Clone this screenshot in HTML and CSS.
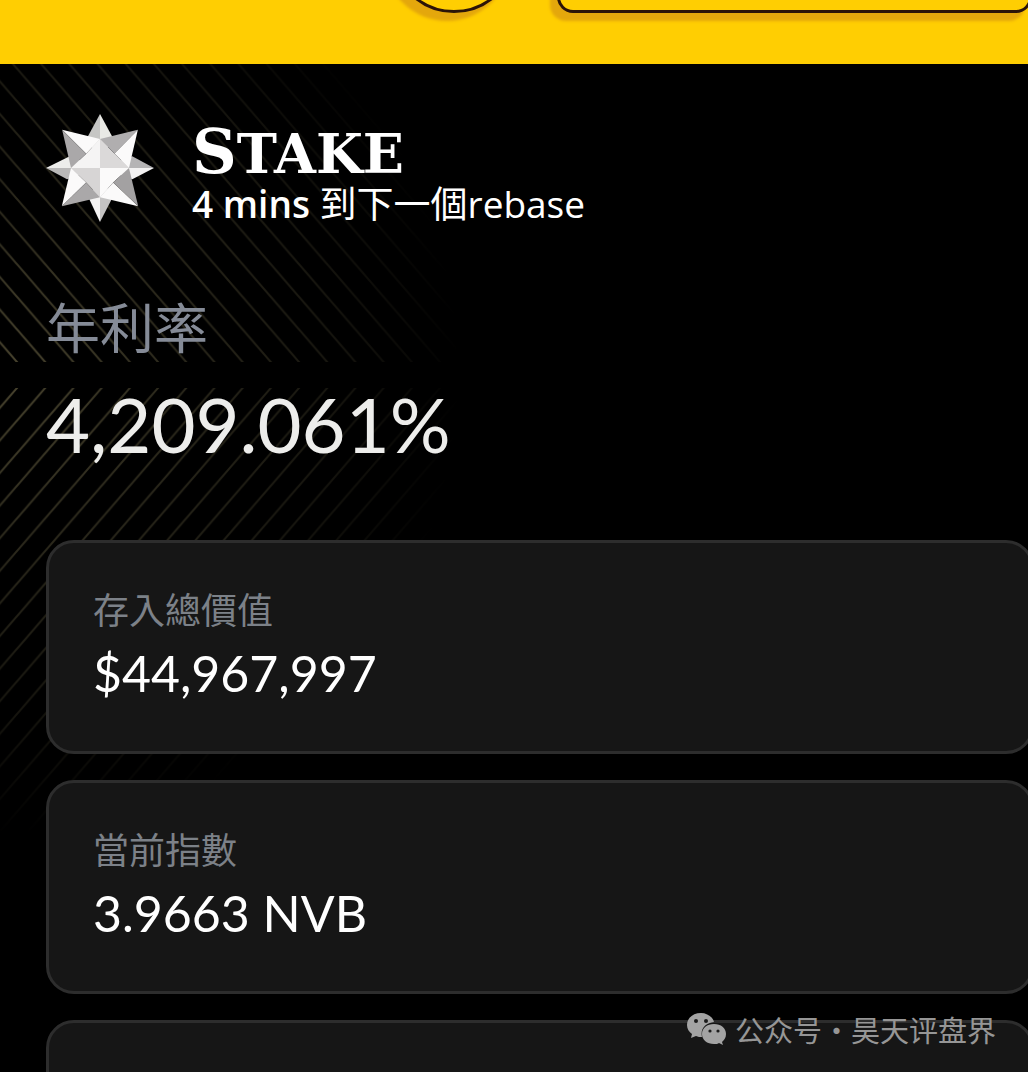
FILE: index.html
```html
<!DOCTYPE html>
<html lang="zh-Hant">
<head>
<meta charset="utf-8">
<meta name="viewport" content="width=device-width, initial-scale=1">
<title>Stake</title>
<link rel="stylesheet" href="styles.css">
</head>
<body>
<div class="page">
  <header class="topbar">
    <button class="round-button" type="button" aria-label="Menu"></button>
    <button class="wide-button" type="button" aria-label="Wallet"></button>
  </header>

  <main class="stake">
    <svg class="stripes" width="480" height="780" viewBox="0 64 480 780" aria-hidden="true">
      <defs>
        <pattern id="down" patternUnits="userSpaceOnUse" x="17" y="362" width="28.2" height="32.6">
          <path d="M0 0L28.2 32.6M-14.1 16.3L14.1 48.9M14.1 -16.3L42.3 16.3"/>
        </pattern>
        <pattern id="up" patternUnits="userSpaceOnUse" x="17" y="388" width="28.2" height="32.6">
          <path d="M0 32.6L28.2 0M-14.1 16.3L14.1 -16.3M14.1 48.9L42.3 16.3"/>
        </pattern>
        <radialGradient id="fade" gradientUnits="userSpaceOnUse" cx="0" cy="375" r="460">
          <stop offset="0" stop-color="#fff"/>
          <stop offset="0.35" stop-color="#999"/>
          <stop offset="0.7" stop-color="#555"/>
          <stop offset="1" stop-color="#000"/>
        </radialGradient>
        <mask id="glow" maskUnits="userSpaceOnUse" x="0" y="64" width="480" height="780">
          <rect x="0" y="64" width="480" height="780" fill="url(#fade)"/>
        </mask>
      </defs>
      <g mask="url(#glow)">
        <rect x="0" y="64" width="480" height="298" fill="url(#down)"/>
        <rect x="0" y="388" width="480" height="456" fill="url(#up)"/>
      </g>
    </svg>

    <section class="heading">
      <svg class="star" viewBox="46 42 328 328" aria-hidden="true">
        <path fill="#c6c6c4" d="M210 42V206L173 110z"/>
        <path fill="#e9e9e5" d="M210 42V206L247 110z"/>
        <path fill="#ededeb" d="M46 206H210L118 170z"/>
        <path fill="#b9b8b8" d="M46 206H210L110 240z"/>
        <path fill="#b5b4b5" d="M374 206H210L308 170z"/>
        <path fill="#f3f2f2" d="M374 206H210L308 240z"/>
        <path fill="#f4f3f3" d="M210 370V206L178 302z"/>
        <path fill="#c4c3c3" d="M210 370V206L245 302z"/>
        <path fill="#f5f4f4" d="M210 118V206H122L168 163z"/>
        <path fill="#dbd9d9" d="M210 118V206H298L254 162z"/>
        <path fill="#d7d5d5" d="M122 206H210V295L168 250z"/>
        <path fill="#fbfafa" d="M298 206H210V295L250 250z"/>
        <path fill="#fbfafa" d="M95 90L210 118L168 163z"/>
        <path fill="#aaa8a9" d="M95 90L122 206L168 163z"/>
        <path fill="#b0aeaf" d="M325 90L210 118L254 162z"/>
        <path fill="#fbfafa" d="M325 90L298 206L254 162z"/>
        <path fill="#fbfafa" d="M94 322L122 206L168 250z"/>
        <path fill="#aaa8a9" d="M94 322L210 295L168 250z"/>
        <path fill="#fbfafa" d="M326 322L210 295L250 250z"/>
        <path fill="#a3a1a2" d="M326 322L298 206L250 250z"/>
      </svg>
      <div class="heading-text">
        <h1 class="title">STAKE</h1>
        <p class="rebase"><strong>4 mins</strong> 到下一個rebase</p>
      </div>
    </section>

    <section class="apy">
      <h2 class="apy-label">年利率</h2>
      <p class="apy-value">4,209.061%</p>
    </section>

    <section class="cards">
      <article class="card">
        <h3 class="card-label">存入總價值</h3>
        <p class="card-value">$44,967,997</p>
      </article>
      <article class="card">
        <h3 class="card-label">當前指數</h3>
        <p class="card-value">3.9663 NVB</p>
      </article>
      <article class="card"></article>
    </section>
  </main>

  <div class="watermark" lang="zh-Hans">
    <svg class="wechat" viewBox="0 0 39 33" aria-hidden="true">
      <path fill="#a3a3a3" d="M14 0C6 0 0 5 0 12c0 4 2 7 5 9l-1 4 5-2c2 1 4 1 6 1C13 15 19 10 27 9 26 4 20 0 14 0z"/>
      <path fill="#a3a3a3" d="M27 11c-7 0-12 4-12 10s5 10 12 10c2 0 4 0 5-1l4 2-1-3c2-2 4-4 4-8 0-6-5-10-12-10z"/>
      <g fill="#1c1c1c"><circle cx="9" cy="8" r="2"/><circle cx="19" cy="8" r="2"/><circle cx="23" cy="18" r="1.6"/><circle cx="31" cy="18" r="1.6"/></g>
    </svg>
    <span>公众号</span><span class="dot">·</span><span>昊天评盘界</span>
  </div>
</div>
</body>
</html>
```
FILE: styles.css
```css
* {
  box-sizing: border-box;
}

body {
  margin: 0;
  background: #000;
  color: #fff;
  font-family: "Open Sans", "Noto Sans CJK TC", sans-serif;
}

h1, h2, h3, p {
  margin: 0;
  font-weight: 400;
}

.page {
  position: relative;
  height: 100vh;
  overflow: hidden;
}

.topbar {
  display: flex;
  justify-content: flex-end;
  align-items: flex-end;
  gap: 40px;
  height: 64px;
  padding-bottom: 51px;
  margin-right: -4px;
  overflow: hidden;
  background: #ffce02;
}

.round-button,
.wide-button {
  flex: none;
  height: 126px;
  padding: 0;
  border: 3px solid #2c1408;
  background: #ffce02;
  box-shadow: -7px 8px 3px #e4a70c;
}

.round-button {
  width: 126px;
  border-radius: 50%;
}

.wide-button {
  width: 46%;
  border-radius: 16px;
}

.stake {
  position: relative;
  padding: 50px 0 0 46px;
}

.stripes {
  position: absolute;
  top: 0;
  left: 0;
}

.stripes path {
  fill: none;
  stroke: #4b4630;
  stroke-width: 2;
}

.heading,
.apy,
.cards {
  position: relative;
}

.heading {
  display: flex;
  align-items: flex-start;
  gap: 38px;
}

.heading-text {
  padding-top: 10px;
}

.star {
  width: 108px;
  height: 108px;
}

.title {
  font: 700 54px/56px "DejaVu Serif", serif;
}

.title::first-letter {
  font-size: 62px;
}

.rebase {
  font-size: 37px;
  line-height: 44px;
}

.rebase strong {
  font-weight: 600;
}

.apy {
  padding-top: 62px;
}

.apy-label {
  color: #858b97;
  font-size: 54px;
  line-height: 80px;
}

.apy-value {
  color: #ededeb;
  font: 400 76px/112px Lato, sans-serif;
}

.cards {
  display: flex;
  flex-direction: column;
  gap: 26px;
  margin: 60px -6px 0 0;
}

.card {
  min-height: 214px;
  padding: 42px 44px;
  border: 3px solid #2d2d2d;
  border-radius: 28px;
  background: #161616;
}

.card-label {
  color: #7c8188;
  font-size: 36px;
  line-height: 52px;
}

.card-value {
  font: 400 50px/72px Lato, sans-serif;
}

.watermark {
  position: absolute;
  right: 32px;
  bottom: 22px;
  display: flex;
  align-items: center;
  color: #969696;
  font: 400 29px/42px "Noto Sans CJK SC", sans-serif;
}

.wechat {
  width: 39px;
  height: 33px;
  margin-right: 9px;
}

.dot {
  width: 29px;
  text-align: center;
}
```
